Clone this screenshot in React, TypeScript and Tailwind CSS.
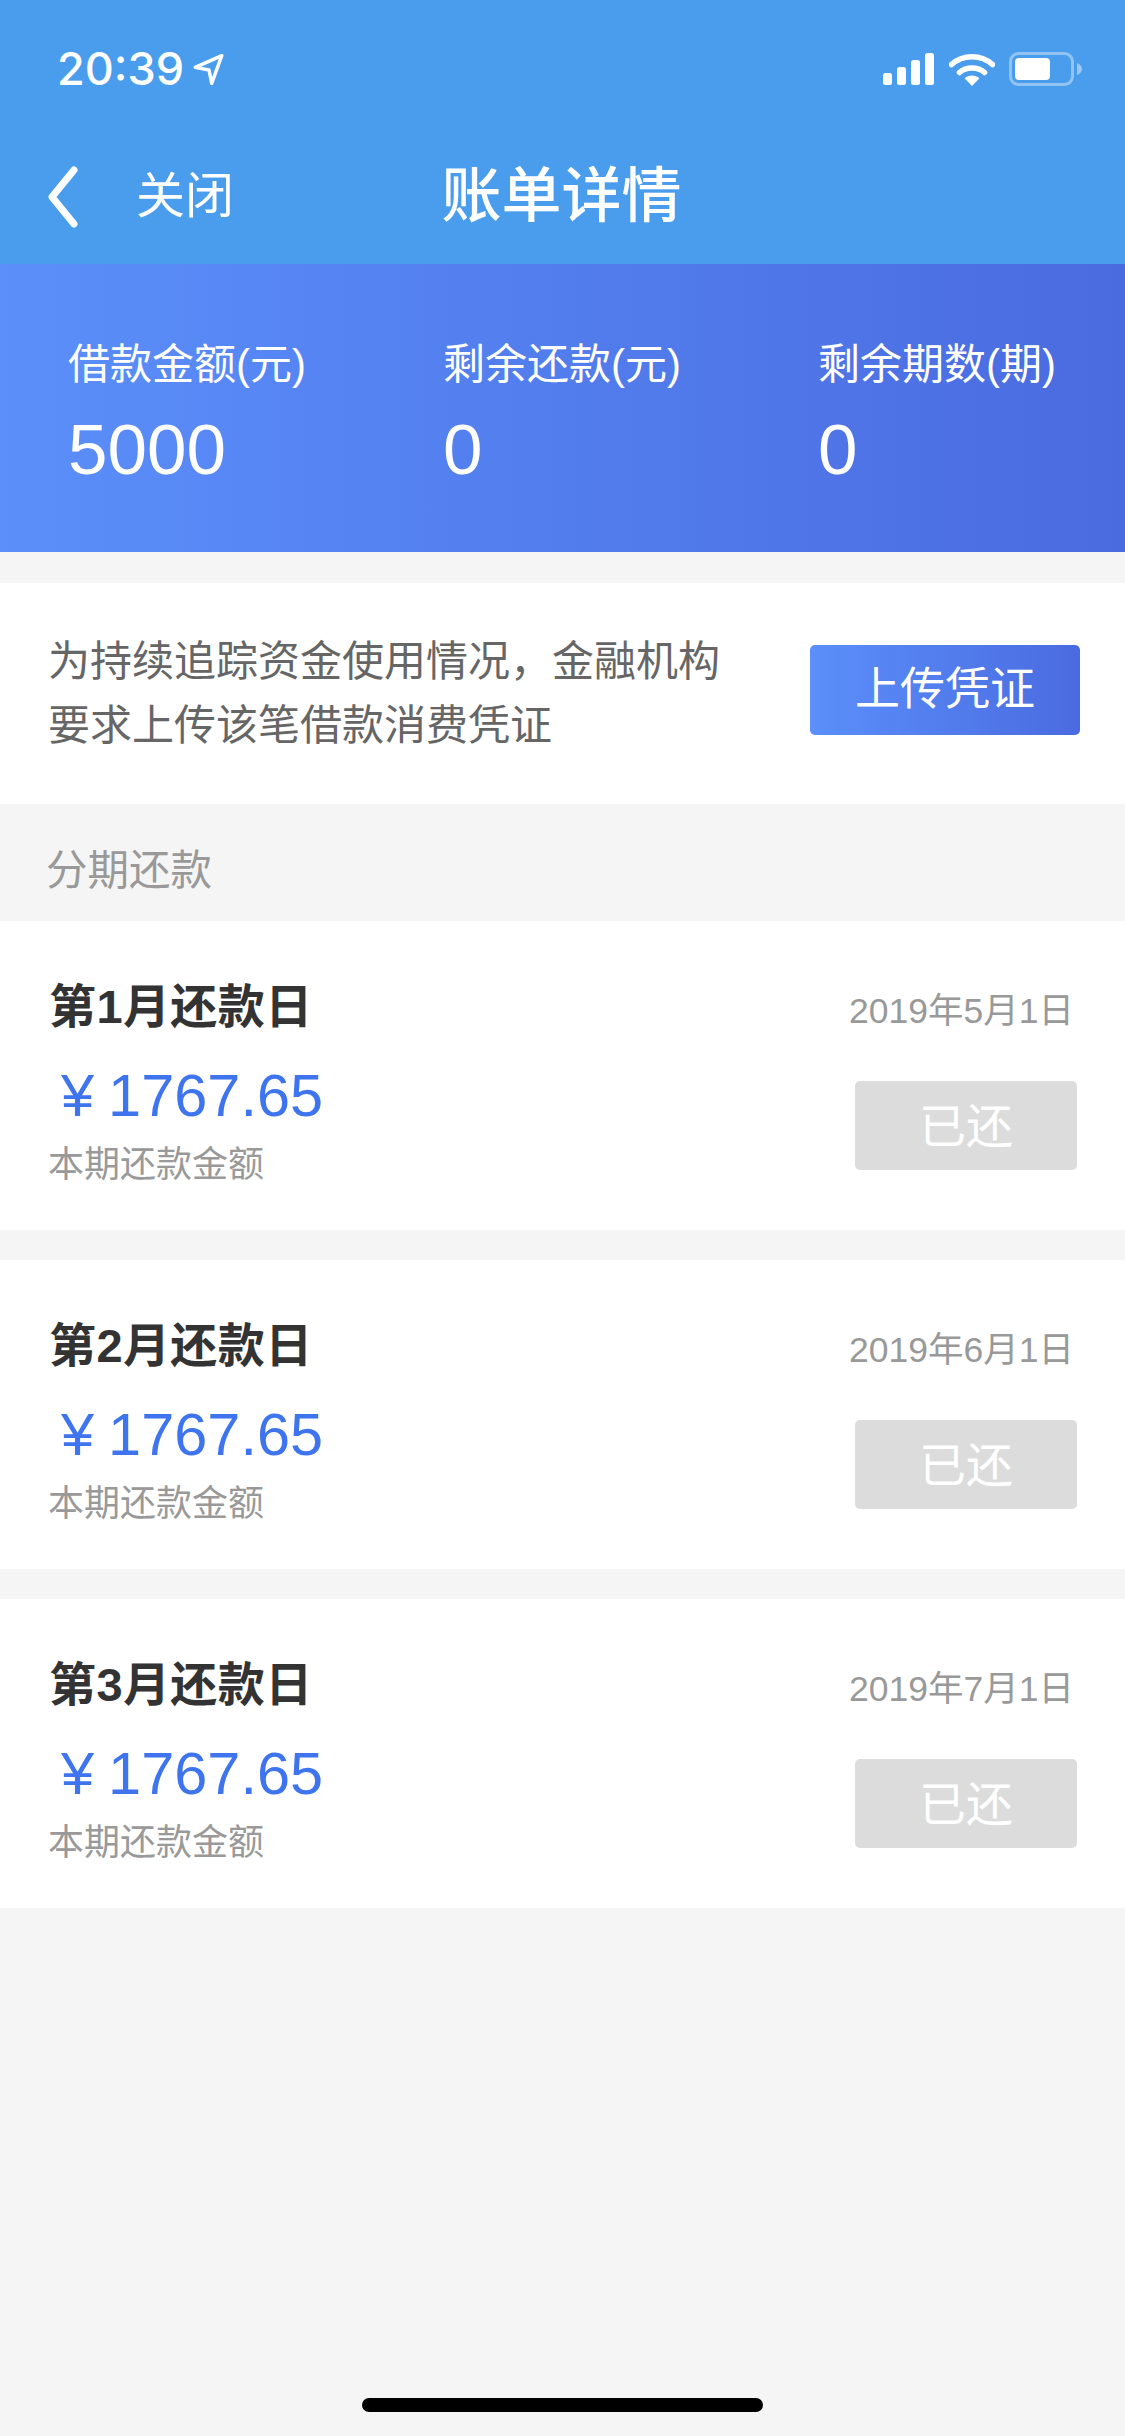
const FONT = "font-['Liberation_Sans','Noto_Sans_CJK_SC',sans-serif]";

function Signal() {
  return (
    <svg width="52" height="32" viewBox="0 0 52 32" fill="#fff" aria-hidden="true">
      <rect x="0" y="20" width="9" height="12" rx="2.5" />
      <rect x="14" y="14" width="9" height="18" rx="2.5" />
      <rect x="28" y="7" width="9" height="25" rx="2.5" />
      <rect x="42" y="0" width="9" height="32" rx="2.5" />
    </svg>
  );
}

function Wifi() {
  return (
    <svg width="46" height="33" viewBox="0 0 46 33" fill="none" stroke="#fff" aria-hidden="true">
      <path d="M2.5 11.5C13.5 1 32.5 1 43.5 11.5" strokeWidth="5.5" strokeLinecap="round" />
      <path d="M10.5 19.5C17 13.5 29 13.5 35.500 19.500" strokeWidth="5.5" strokeLinecap="round" />
      <path d="M15.500 25.200C20 21.500 26 21.500 30.500 25.200L23 33Z" fill="#fff" stroke="none" />
    </svg>
  );
}

function Battery() {
  return (
    <svg width="74" height="34" viewBox="0 0 74 34" fill="none" aria-hidden="true">
      <rect x="1.500" y="1.500" width="62" height="31" rx="8" stroke="#fff" strokeOpacity="0.4" strokeWidth="3" />
      <rect x="6" y="6" width="35" height="22" rx="4" fill="#fff" />
      <path d="M68 11C71 12 73 14.500 73 17C73 19.500 71 22 68 23Z" fill="#fff" fillOpacity="0.45" />
    </svg>
  );
}

function Arrow() {
  return (
    <svg width="33" height="33" viewBox="0 0 30 31" fill="none" aria-hidden="true">
      <path d="M27.500 2.500L2.500 13.500L15.500 16L18 28.500Z" stroke="#fff" strokeWidth="3.200" strokeLinejoin="round" />
    </svg>
  );
}

function Stat({ label, value, w }: { label: string; value: string; w: string }) {
  return (
    <div className={`${w} flex flex-col`}>
      <div className="text-[42px] leading-[60px] text-white whitespace-nowrap">{label}</div>
      <div className="text-[71px] leading-[80px] text-white mt-[15px]">{value}</div>
    </div>
  );
}

function Installment({ title, date }: { title: string; date: string }) {
  return (
    <div className="h-[309px] bg-white flex justify-between pl-[49px] pr-[48px] pt-[53px]">
      <div className="flex flex-col">
        <div className="text-[47px] leading-[66px] font-bold text-[#333333] tracking-[0.4px]">{title}</div>
        <div className="text-[59.500px] leading-[68px] text-[#3f74ef] mt-[22px] flex items-baseline">
          <span className="ml-[12px] mr-[14px]">¥</span>
          <span>1767.65</span>
        </div>
        <div className="text-[36px] leading-[50px] text-[#999999] mt-[10px] -ml-[1px]">本期还款金额</div>
      </div>
      <div className="flex flex-col items-end">
        <div className="text-[35.500px] leading-[50px] text-[#999999] mt-[12px] mr-[3px]">{date}</div>
        <div className="w-[222px] h-[89px] mt-[45px] pt-[4px] rounded-[5px] bg-[#dcdcdc] text-white text-[47px] flex items-center justify-center">已还</div>
      </div>
    </div>
  );
}

export default function App() {
  return (
    <div className={`${FONT} relative w-[1125px] h-[2436px] bg-[#f5f5f5] overflow-hidden`}>
      <header className="h-[264px] bg-[#499dec] flex flex-col">
        <div className="h-[132px] pl-[57px] pr-[42px] pt-[41px] flex justify-between items-start">
          <div className="flex items-center gap-[8px] text-white">
            <span className="font-['Inter',sans-serif] text-[45px] leading-[56px] font-medium">20:39</span>
            <Arrow />
          </div>
          <div className="flex items-center gap-[14px] pt-[11px]">
            <Signal />
            <Wifi />
            <Battery />
          </div>
        </div>
        <div className="relative flex items-center h-[100px] pl-[46px] mt-[15px]">
          <svg width="34" height="62" viewBox="0 0 34 62" fill="none" aria-hidden="true">
            <path d="M28 4L6 31L28 58" stroke="#fff" strokeWidth="7" strokeLinecap="round" strokeLinejoin="round" />
          </svg>
          <span className="ml-[56px] text-[49px] text-white">关闭</span>
          <span className="absolute inset-x-0 pr-[2px] text-center text-[60px] font-medium text-white">账单详情</span>
        </div>
      </header>

      <section className="h-[288px] bg-gradient-to-r from-[#5b8ffa] to-[#4a6be0] flex pl-[68px] pt-[71px]">
        <Stat w="w-[375px]" label="借款金额(元)" value="5000" />
        <Stat w="w-[375px]" label="剩余还款(元)" value="0" />
        <Stat w="w-[240px]" label="剩余期数(期)" value="0" />
      </section>

      <section className="mt-[31px] h-[221px] bg-white flex items-center justify-between pl-[48px] pr-[45px]">
        <p className="w-[700px] text-[42px] leading-[64px] text-[#666666]">
          为持续追踪资金使用情况{"\uFF0C"}金融机构
          <br />
          要求上传该笔借款消费凭证
        </p>
        <div className="w-[270px] h-[90px] -mt-[8px] rounded-[5px] bg-gradient-to-r from-[#5b8ffa] to-[#4a6be0] text-white text-[45px] flex items-center justify-center">
          上传凭证
        </div>
      </section>

      <div className="h-[117px] flex items-center pl-[46px] pt-[18px] text-[41.500px] text-[#999999]">分期还款</div>

      <div className="flex flex-col gap-[30px]">
        <Installment title="第1月还款日" date="2019年5月1日" />
        <Installment title="第2月还款日" date="2019年6月1日" />
        <Installment title="第3月还款日" date="2019年7月1日" />
      </div>

      <div className="absolute left-[362px] top-[2398px] w-[401px] h-[14px] rounded-full bg-black" />
    </div>
  );
}
